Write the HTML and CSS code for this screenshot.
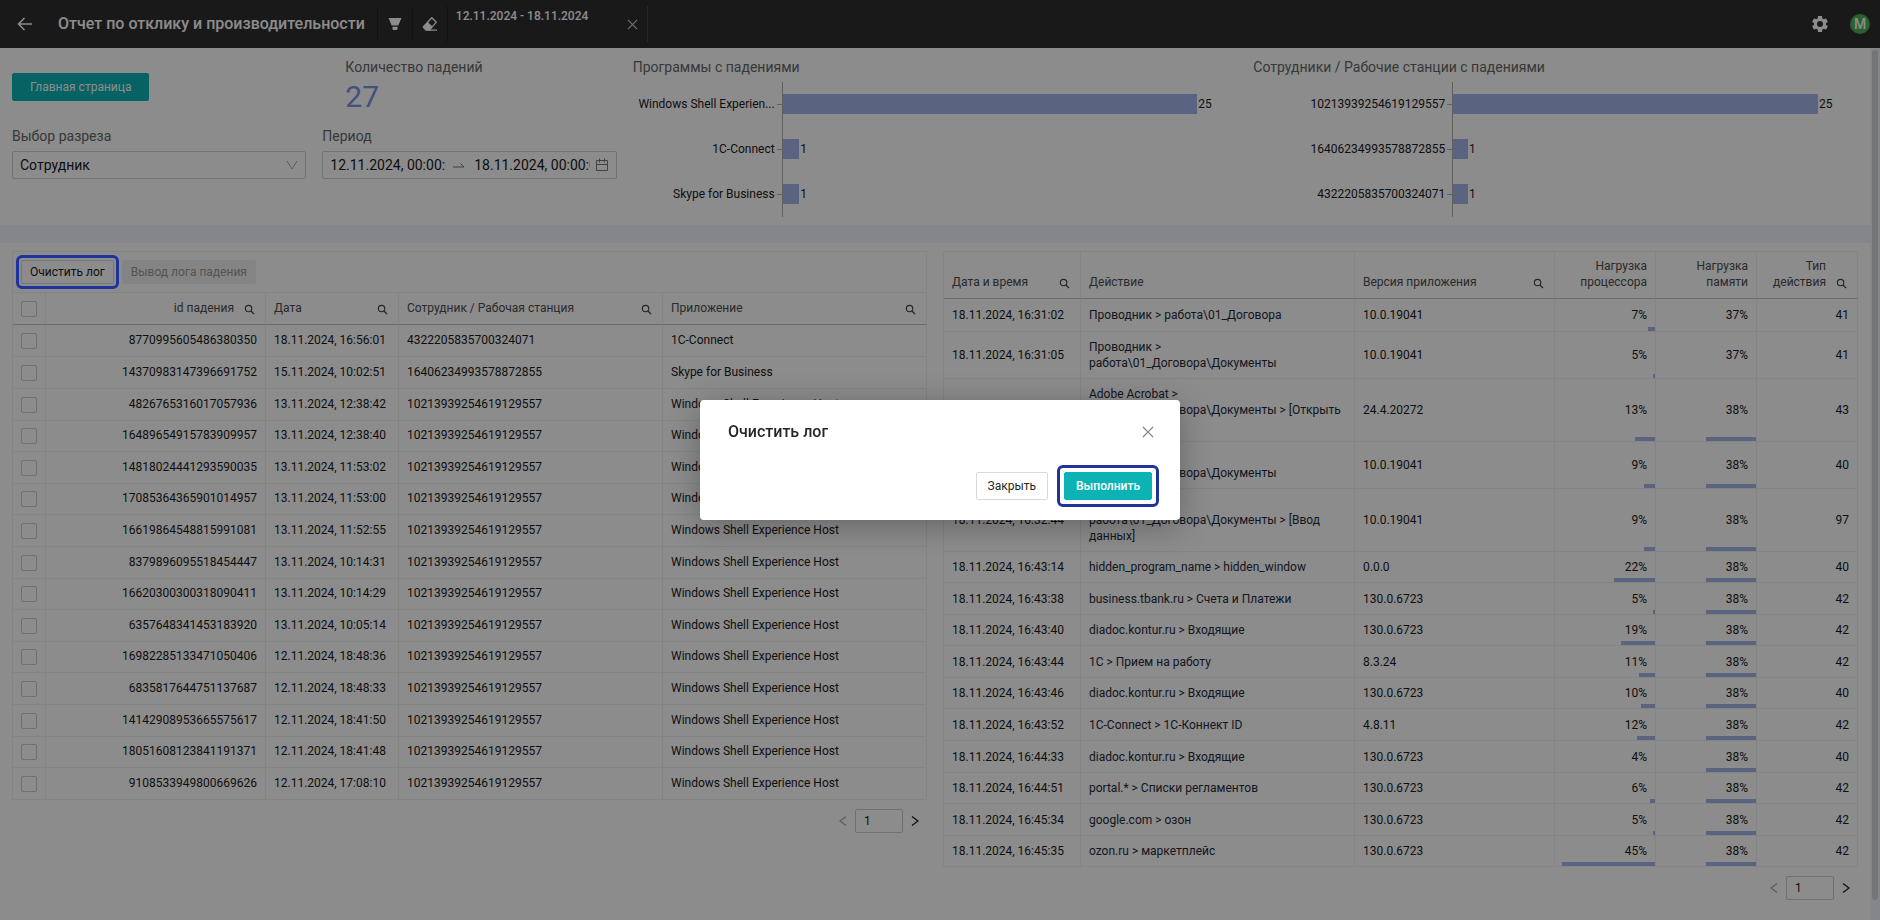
FILE: index.html
```html
<!DOCTYPE html>
<html lang="ru">
<head>
<meta charset="utf-8">
<meta name="viewport" content="width=device-width, initial-scale=1">
<title>Отчет по отклику и производительности</title>
<link rel="stylesheet" href="styles.css">
</head>
<body>
<svg class="sprite" aria-hidden="true">
  <symbol id="search" viewBox="0 0 12 12"><circle cx="5" cy="5" r="3.5" fill="none" stroke="currentColor" stroke-width="1.2"/><path d="M7.6 7.6 11 11" stroke="currentColor" stroke-width="1.4"/></symbol>
  <symbol id="cross" viewBox="0 0 12 12"><path d="M1 1 11 11M11 1 1 11" stroke="currentColor" stroke-width="1.2"/></symbol>
  <symbol id="prev" viewBox="0 0 8 12"><path d="M7 1.5 1 6 7 10.5" fill="none" stroke="currentColor" stroke-width="1.3"/></symbol>
  <symbol id="next" viewBox="0 0 8 12"><path d="M1 1.5 7 6 1 10.5" fill="none" stroke="currentColor" stroke-width="1.3"/></symbol>
</svg>
<div class="app">
  <header class="topbar">
    <button class="icon-button back" aria-label="Назад"><svg width="16" height="14" viewBox="0 0 16 14"><path d="M15 7H2M7.500 1 1.500 7 7.500 13" fill="none" stroke="currentColor" stroke-width="1.6"/></svg></button>
    <h1 class="topbar-title">Отчет по отклику и производительности</h1>
    <button class="icon-button tool" aria-label="Фильтр"><svg width="14" height="14" viewBox="0 0 14 14"><path fill="currentColor" d="M.5 1h13L10.300 8.500H3.700zM4.500 9.800h5V12.300l-.8.700H5.300l-.8-.700z"/></svg></button>
    <button class="icon-button tool" aria-label="Очистить фильтры"><svg width="16" height="16" viewBox="0 0 16 16"><path fill="none" stroke="currentColor" stroke-width="1.300" stroke-linejoin="round" d="M9.800 1.700 14.300 6.200 7.500 14.200H4.200L1.200 11z"/><path fill="currentColor" d="M5.700 6 10.500 10.600 7.500 14.300H4.200L.8 11zM7 13.500h8v1.200H7z"/></svg></button>
    <div class="period-chip">
      <span class="period-text">12.11.2024 - 18.11.2024</span>
      <button class="icon-button chip-close" aria-label="Сбросить период"><svg width="11" height="11"><use href="#cross"/></svg></button>
    </div>
    <div class="topbar-right">
      <button class="icon-button" aria-label="Настройки"><svg width="20" height="20" viewBox="0 0 24 24"><path fill="currentColor" d="M19.140 12.940c.04-.3.06-.61.06-.94s-.02-.64-.07-.94l2.030-1.580a.49.49 0 0 0 .12-.61l-1.920-3.320a.49.49 0 0 0-.59-.22l-2.390.96a7 7 0 0 0-1.620-.94l-.36-2.540A.48.48 0 0 0 13.920 2.400h-3.840a.47.47 0 0 0-.47.41l-.36 2.540c-.59.24-1.130.57-1.620.94l-2.390-.96a.48.48 0 0 0-.59.22L2.740 8.870a.47.47 0 0 0 .12.61l2.030 1.580c-.05.3-.09.63-.09.94s.02.64.07.94l-2.030 1.580a.49.49 0 0 0-.12.61l1.920 3.320c.12.22.37.29.59.22l2.390-.96c.5.38 1.030.7 1.620.94l.36 2.540c.05.24.24.41.48.41h3.840c.24 0 .44-.17.47-.41l.36-2.540a6.800 6.800 0 0 0 1.620-.94l2.390.96c.22.08.47 0 .59-.22l1.920-3.320a.47.47 0 0 0-.12-.61zM12 15.600a3.600 3.600 0 1 1 0-7.200 3.600 3.600 0 0 1 0 7.200z"/></svg></button>
      <button class="avatar" aria-label="Профиль">M</button>
    </div>
  </header>

  <div class="viewport">
    <main class="content">
      <section class="summary">
        <div class="controls">
          <div><button class="button primary home">Главная страница</button></div>
          <div class="metric"><h2 class="caption">Количество падений</h2><p class="metric-value">27</p></div>
          <div class="field">
            <label class="caption" for="slice">Выбор разреза</label>
            <div class="select-box">
              <select id="slice"><option>Сотрудник</option></select>
              <svg class="chevron" width="12" height="10" viewBox="0 0 12 10"><path d="M1 1 6 9 11 1" fill="none" stroke="currentColor"/></svg>
            </div>
          </div>
          <div class="field">
            <label class="caption" for="from">Период</label>
            <div class="range-box">
              <input id="from" type="text" value="12.11.2024, 00:00:00">
              <svg class="range-arrow" width="12" height="6" viewBox="0 0 12 6"><path d="M0 5H11L7.500 1.500" fill="none" stroke="currentColor"/></svg>
              <input type="text" aria-label="Конец периода" value="18.11.2024, 00:00:00">
              <svg width="14" height="14" viewBox="0 0 14 14"><path d="M1.500 2.500h11v10h-11zM1.500 6.500h11M4.500 .5v4M9.500 .5v4" fill="none" stroke="currentColor"/></svg>
            </div>
          </div>
        </div>
        <figure class="chart programs">
          <figcaption class="caption">Программы с падениями</figcaption>
          <div class="chart-row"><span class="chart-label">Windows Shell Experien...</span><div class="track"><i class="chart-bar" style="width:100%"></i><span>25</span></div></div>
          <div class="chart-row"><span class="chart-label">1C-Connect</span><div class="track"><i class="chart-bar" style="width:4%"></i><span>1</span></div></div>
          <div class="chart-row"><span class="chart-label">Skype for Business</span><div class="track"><i class="chart-bar" style="width:4%"></i><span>1</span></div></div>
        </figure>
        <figure class="chart stations">
          <figcaption class="caption">Сотрудники / Рабочие станции с падениями</figcaption>
          <div class="chart-row"><span class="chart-label">10213939254619129557</span><div class="track"><i class="chart-bar" style="width:100%"></i><span>25</span></div></div>
          <div class="chart-row"><span class="chart-label">16406234993578872855</span><div class="track"><i class="chart-bar" style="width:4%"></i><span>1</span></div></div>
          <div class="chart-row"><span class="chart-label">4322205835700324071</span><div class="track"><i class="chart-bar" style="width:4%"></i><span>1</span></div></div>
        </figure>
      </section>

      <section class="details">
        <div class="panel">
          <div class="toolbar">
            <div class="ring ring-small"><button class="button small">Очистить лог</button></div>
            <button class="button small" disabled>Вывод лога падения</button>
          </div>
          <table class="grid crashes">
            <colgroup><col class="w-check"><col class="w-id"><col class="w-date"><col><col></colgroup>
            <thead><tr>
              <th class="check"><input type="checkbox" aria-label="Выбрать все"></th>
              <th><div class="head right"><span>id падения</span><svg><use href="#search"/></svg></div></th>
              <th><div class="head"><span>Дата</span><svg><use href="#search"/></svg></div></th>
              <th><div class="head"><span>Сотрудник / Рабочая станция</span><svg><use href="#search"/></svg></div></th>
              <th><div class="head"><span>Приложение</span><svg><use href="#search"/></svg></div></th>
            </tr></thead>
            <tbody>
              <tr><td class="check"><input type="checkbox" aria-label="Выбрать строку"></td><td class="num">8770995605486380350</td><td>18.11.2024, 16:56:01</td><td>4322205835700324071</td><td>1C-Connect</td></tr>
              <tr><td class="check"><input type="checkbox" aria-label="Выбрать строку"></td><td class="num">14370983147396691752</td><td>15.11.2024, 10:02:51</td><td>16406234993578872855</td><td>Skype for Business</td></tr>
              <tr><td class="check"><input type="checkbox" aria-label="Выбрать строку"></td><td class="num">4826765316017057936</td><td>13.11.2024, 12:38:42</td><td>10213939254619129557</td><td>Windows Shell Experience Host</td></tr>
              <tr><td class="check"><input type="checkbox" aria-label="Выбрать строку"></td><td class="num">16489654915783909957</td><td>13.11.2024, 12:38:40</td><td>10213939254619129557</td><td>Windows Shell Experience Host</td></tr>
              <tr><td class="check"><input type="checkbox" aria-label="Выбрать строку"></td><td class="num">14818024441293590035</td><td>13.11.2024, 11:53:02</td><td>10213939254619129557</td><td>Windows Shell Experience Host</td></tr>
              <tr><td class="check"><input type="checkbox" aria-label="Выбрать строку"></td><td class="num">17085364365901014957</td><td>13.11.2024, 11:53:00</td><td>10213939254619129557</td><td>Windows Shell Experience Host</td></tr>
              <tr><td class="check"><input type="checkbox" aria-label="Выбрать строку"></td><td class="num">16619864548815991081</td><td>13.11.2024, 11:52:55</td><td>10213939254619129557</td><td>Windows Shell Experience Host</td></tr>
              <tr><td class="check"><input type="checkbox" aria-label="Выбрать строку"></td><td class="num">8379896095518454447</td><td>13.11.2024, 10:14:31</td><td>10213939254619129557</td><td>Windows Shell Experience Host</td></tr>
              <tr><td class="check"><input type="checkbox" aria-label="Выбрать строку"></td><td class="num">16620300300318090411</td><td>13.11.2024, 10:14:29</td><td>10213939254619129557</td><td>Windows Shell Experience Host</td></tr>
              <tr><td class="check"><input type="checkbox" aria-label="Выбрать строку"></td><td class="num">6357648341453183920</td><td>13.11.2024, 10:05:14</td><td>10213939254619129557</td><td>Windows Shell Experience Host</td></tr>
              <tr><td class="check"><input type="checkbox" aria-label="Выбрать строку"></td><td class="num">16982285133471050406</td><td>12.11.2024, 18:48:36</td><td>10213939254619129557</td><td>Windows Shell Experience Host</td></tr>
              <tr><td class="check"><input type="checkbox" aria-label="Выбрать строку"></td><td class="num">6835817644751137687</td><td>12.11.2024, 18:48:33</td><td>10213939254619129557</td><td>Windows Shell Experience Host</td></tr>
              <tr><td class="check"><input type="checkbox" aria-label="Выбрать строку"></td><td class="num">14142908953665575617</td><td>12.11.2024, 18:41:50</td><td>10213939254619129557</td><td>Windows Shell Experience Host</td></tr>
              <tr><td class="check"><input type="checkbox" aria-label="Выбрать строку"></td><td class="num">18051608123841191371</td><td>12.11.2024, 18:41:48</td><td>10213939254619129557</td><td>Windows Shell Experience Host</td></tr>
              <tr><td class="check"><input type="checkbox" aria-label="Выбрать строку"></td><td class="num">9108533949800669626</td><td>12.11.2024, 17:08:10</td><td>10213939254619129557</td><td>Windows Shell Experience Host</td></tr>
            </tbody>
          </table>
          <nav class="pager" aria-label="Страницы падений">
            <button class="icon-button" aria-label="Предыдущая" disabled><svg width="8" height="12"><use href="#prev"/></svg></button>
            <input type="text" value="1" aria-label="Номер страницы">
            <button class="icon-button" aria-label="Следующая"><svg width="8" height="12"><use href="#next"/></svg></button>
          </nav>
        </div>

        <div class="panel">
          <table class="grid actions">
            <colgroup><col class="w-time"><col><col class="w-version"><col class="w-load"><col class="w-load"><col class="w-load"></colgroup>
            <thead><tr>
              <th><div class="head"><span>Дата и время</span><svg><use href="#search"/></svg></div></th>
              <th>Действие</th>
              <th><div class="head"><span>Версия приложения</span><svg><use href="#search"/></svg></div></th>
              <th class="num">Нагрузка процессора</th>
              <th class="num">Нагрузка памяти</th>
              <th><div class="head right"><span>Тип действия</span><svg><use href="#search"/></svg></div></th>
            </tr></thead>
            <tbody>
              <tr><td>18.11.2024, 16:31:02</td><td class="action">Проводник &gt; работа\01_Договора</td><td>10.0.19041</td><td class="num">7%<i class="load" style="width:7%"></i></td><td class="num">37%</td><td class="num">41</td></tr>
              <tr><td>18.11.2024, 16:31:05</td><td class="action">Проводник &gt; работа\01_Договора\Документы</td><td>10.0.19041</td><td class="num">5%<i class="load" style="width:2%"></i></td><td class="num">37%</td><td class="num">41</td></tr>
              <tr><td>18.11.2024, 16:31:30</td><td class="action">Adobe Acrobat &gt; работа\01_Договора\Документы &gt; [Открыть файл]</td><td>24.4.20272</td><td class="num">13%<i class="load" style="width:20%"></i></td><td class="num">38%<i class="load" style="width:50%"></i></td><td class="num">43</td></tr>
              <tr><td>18.11.2024, 16:32:10</td><td class="action">Проводник &gt; работа\01_Договора\Документы</td><td>10.0.19041</td><td class="num">9%<i class="load" style="width:11%"></i></td><td class="num">38%<i class="load" style="width:50%"></i></td><td class="num">40</td></tr>
              <tr><td>18.11.2024, 16:32:44</td><td class="action">Проводник &gt; работа\01_Договора\Документы &gt; [Ввод данных]</td><td>10.0.19041</td><td class="num">9%<i class="load" style="width:11%"></i></td><td class="num">38%<i class="load" style="width:50%"></i></td><td class="num">97</td></tr>
              <tr><td>18.11.2024, 16:43:14</td><td class="action">hidden_program_name &gt; hidden_window</td><td>0.0.0</td><td class="num">22%<i class="load" style="width:41%"></i></td><td class="num">38%<i class="load" style="width:50%"></i></td><td class="num">40</td></tr>
              <tr><td>18.11.2024, 16:43:38</td><td class="action">business.tbank.ru &gt; Счета и Платежи</td><td>130.0.6723</td><td class="num">5%<i class="load" style="width:2%"></i></td><td class="num">38%<i class="load" style="width:50%"></i></td><td class="num">42</td></tr>
              <tr><td>18.11.2024, 16:43:40</td><td class="action">diadoc.kontur.ru &gt; Входящие</td><td>130.0.6723</td><td class="num">19%<i class="load" style="width:34%"></i></td><td class="num">38%<i class="load" style="width:50%"></i></td><td class="num">42</td></tr>
              <tr><td>18.11.2024, 16:43:44</td><td class="action">1С &gt; Прием на работу</td><td>8.3.24</td><td class="num">11%<i class="load" style="width:16%"></i></td><td class="num">38%<i class="load" style="width:50%"></i></td><td class="num">42</td></tr>
              <tr><td>18.11.2024, 16:43:46</td><td class="action">diadoc.kontur.ru &gt; Входящие</td><td>130.0.6723</td><td class="num">10%<i class="load" style="width:14%"></i></td><td class="num">38%<i class="load" style="width:50%"></i></td><td class="num">40</td></tr>
              <tr><td>18.11.2024, 16:43:52</td><td class="action">1C-Connect &gt; 1С-Коннект ID</td><td>4.8.11</td><td class="num">12%<i class="load" style="width:18%"></i></td><td class="num">38%<i class="load" style="width:50%"></i></td><td class="num">42</td></tr>
              <tr><td>18.11.2024, 16:44:33</td><td class="action">diadoc.kontur.ru &gt; Входящие</td><td>130.0.6723</td><td class="num">4%</td><td class="num">38%<i class="load" style="width:50%"></i></td><td class="num">40</td></tr>
              <tr><td>18.11.2024, 16:44:51</td><td class="action">portal.* &gt; Списки регламентов</td><td>130.0.6723</td><td class="num">6%<i class="load" style="width:5%"></i></td><td class="num">38%<i class="load" style="width:50%"></i></td><td class="num">42</td></tr>
              <tr><td>18.11.2024, 16:45:34</td><td class="action">google.com &gt; озон</td><td>130.0.6723</td><td class="num">5%<i class="load" style="width:2%"></i></td><td class="num">38%<i class="load" style="width:50%"></i></td><td class="num">42</td></tr>
              <tr><td>18.11.2024, 16:45:35</td><td class="action">ozon.ru &gt; маркетплейс</td><td>130.0.6723</td><td class="num">45%<i class="load" style="width:93%"></i></td><td class="num">38%<i class="load" style="width:50%"></i></td><td class="num">42</td></tr>
            </tbody>
          </table>
          <nav class="pager" aria-label="Страницы действий">
            <button class="icon-button" aria-label="Предыдущая" disabled><svg width="8" height="12"><use href="#prev"/></svg></button>
            <input type="text" value="1" aria-label="Номер страницы">
            <button class="icon-button" aria-label="Следующая"><svg width="8" height="12"><use href="#next"/></svg></button>
          </nav>
        </div>
      </section>
    </main>
    <div class="scrollbar"><div class="thumb"></div></div>
  </div>
</div>

<div class="mask"></div>
<div class="modal-layer">
  <section class="modal" role="dialog" aria-modal="true" aria-labelledby="modal-title">
    <div class="modal-head">
      <h2 id="modal-title">Очистить лог</h2>
      <button class="icon-button" aria-label="Закрыть окно"><svg width="12" height="12"><use href="#cross"/></svg></button>
    </div>
    <div class="modal-actions">
      <button class="button">Закрыть</button>
      <div class="ring ring-large"><button class="button primary">Выполнить</button></div>
    </div>
  </section>
</div>
</body>
</html>
```
FILE: styles.css
```css
* { box-sizing: border-box; }

body {
  margin: 0;
  font: 12px/16px Roboto, "Liberation Sans", sans-serif;
  color: #1a1a1a;
  background: #fff;
}

h1, h2, p, figure { margin: 0; }
button, input, select { font: inherit; color: inherit; }
button { cursor: pointer; }
svg { display: block; flex: none; }
.sprite { position: absolute; width: 0; height: 0; }

.app {
  display: flex;
  flex-direction: column;
  min-height: 100vh;
}

/* Top bar */
.topbar {
  display: flex;
  align-items: center;
  height: 48px;
  padding: 0 10px 0 12px;
  background: #2e2e2e;
  color: #fff;
}

.icon-button {
  display: flex;
  align-items: center;
  justify-content: center;
  width: 24px;
  height: 24px;
  padding: 0;
  border: 0;
  background: none;
}

.back { width: 26px; }

.topbar-title {
  margin: 0 12px 0 20px;
  font-size: 16px;
  line-height: 24px;
  font-weight: 500;
  white-space: nowrap;
}

.tool {
  width: 35px;
  height: 36px;
  border-left: 1px solid #222;
}

.period-chip {
  display: flex;
  justify-content: space-between;
  width: 201px;
  height: 36px;
  padding: 0 2px 0 8px;
  border-left: 1px solid #222;
  border-right: 1px solid #4a4a4a;
  font-weight: 500;
}

.period-text { padding-top: 2px; }
.chip-close { align-self: center; color: #d0d0d0; }

.topbar-right {
  display: flex;
  align-items: center;
  gap: 18px;
  margin-left: auto;
}

.avatar {
  width: 20px;
  height: 20px;
  padding: 0;
  border: 0;
  border-radius: 50%;
  background: #4caf50;
  font-size: 14px;
  line-height: 20px;
  font-weight: 500;
  text-align: center;
}

/* Scrolled area */
.viewport {
  display: flex;
  flex: 1;
}

.content {
  display: flex;
  flex-direction: column;
  flex: 1;
  min-width: 0;
}

.scrollbar {
  width: 10px;
  padding: 2px;
  background: #f2f5fe;
}

.thumb {
  width: 6px;
  height: calc(100% - 18px);
  border-radius: 3px;
  background: #d5d5d5;
}

/* Summary */
.summary {
  display: grid;
  grid-template-columns: repeat(3, minmax(0, 1fr));
  gap: 16px;
  padding: 9px 12px 8px;
}

.controls {
  display: grid;
  grid-template-columns: 1fr 1fr;
  gap: 10px 16px;
  align-content: start;
}

.home { margin-top: 16px; }
.metric { padding-left: 23px; }

.caption {
  display: block;
  font-size: 14px;
  line-height: 20px;
  font-weight: 400;
  color: #666;
}

.metric-value {
  font-size: 30px;
  line-height: 39px;
  color: #7a94e4;
}

.field { min-width: 0; }

.select-box,
.range-box {
  display: flex;
  align-items: center;
  height: 28px;
  margin-top: 5px;
  border: 1px solid #d0d0d0;
  border-radius: 2px;
  font-size: 14px;
}

.select-box select {
  flex: 1;
  height: 26px;
  padding: 0 7px;
  border: 0;
  background: none;
  appearance: none;
}

.select-box svg { margin-right: 7px; color: #aaa; }
.range-box { justify-content: space-between; padding: 0 7px; }
.range-box svg { color: #777; }
.range-box .range-arrow { margin: 0 5px 0 2px; }

.range-box input {
  width: 116px;
  padding: 0;
  border: 0;
  background: none;
}

/* Charts */
.chart .caption { margin-bottom: 5px; }

.chart-row {
  display: flex;
  align-items: stretch;
  height: 45px;
}

.chart-label {
  position: relative;
  flex: none;
  padding-right: 7px;
  border-right: 1px solid #b0b0b0;
  line-height: 44px;
  text-align: right;
}

.chart-label::after {
  content: "";
  position: absolute;
  right: 0;
  top: 22px;
  width: 5px;
  height: 1px;
  background: #b0b0b0;
}

.programs .chart-label { width: 150px; }
.stations .chart-label { width: 200px; }

.track {
  display: flex;
  flex: 1;
  align-items: center;
  gap: 1px;
  min-width: 0;
  padding: 0 40px 1px 0;
}

.chart-bar {
  flex: none;
  height: 20px;
  background: #a4b4e7;
}

/* Tables */
.details {
  display: grid;
  grid-template-columns: repeat(2, minmax(0, 1fr));
  flex: 1;
  gap: 16px;
  align-items: start;
  padding: 8px 12px;
  border-top: 18px solid #f2f5fe;
}

.toolbar {
  display: flex;
  gap: 8px;
  padding: 8px;
  border: 1px solid #f0f0f0;
  border-bottom: 0;
}

.grid {
  width: 100%;
  table-layout: fixed;
  border-spacing: 0;
  border-left: 1px solid #f0f0f0;
}

.w-check { width: 33px; }
.w-id { width: 220px; }
.w-date { width: 133px; }
.w-time { width: 137px; }
.w-version { width: 200px; }
.w-load { width: 101px; }

.grid th,
.grid td {
  position: relative;
  height: 31px;
  padding: 7px 8px;
  border-right: 1px solid #f0f0f0;
  border-bottom: 1px solid #f0f0f0;
  text-align: left;
}

.grid th {
  padding: 6px 8px 8px;
  border-top: 1px solid #f0f0f0;
  border-bottom-color: #c4c4c4;
  vertical-align: bottom;
  font-weight: 400;
  color: #4d4d4d;
}

.crashes th { height: 33px; }

.crashes tbody td { padding: 6px 8px 8px; }
.crashes tbody tr td { height: 32px; }
.crashes tbody tr:nth-child(5n + 4) td,
.crashes tbody tr:nth-child(5n + 6) td { height: 31px; }

.actions tbody tr:nth-child(1) td { height: 33px; }
.actions tbody tr:nth-child(7) td,
.actions tbody tr:nth-child(9) td,
.actions tbody tr:nth-child(11) td,
.actions tbody tr:nth-child(12) td,
.actions tbody tr:nth-child(14) td { height: 32px; }

.grid .num { text-align: right; }
.action { color: #1f2a3a; }

.head {
  display: flex;
  align-items: flex-end;
  justify-content: space-between;
}

.head svg { width: 11px; height: 11px; margin: 0 2px 1px 0; color: #444; }
.head.right { justify-content: flex-end; gap: 10px; text-align: right; }

.grid .check,
.crashes tbody .check { padding: 0 8px; vertical-align: middle; }

.check input {
  display: block;
  width: 16px;
  height: 16px;
  margin: 0;
  border: 1px solid #ccc;
  border-radius: 2px;
  background: #fff;
  appearance: none;
}

.load {
  position: absolute;
  right: 0;
  bottom: 0;
  height: 4px;
  background: #a4b4e7;
}

.pager {
  display: flex;
  justify-content: flex-end;
  margin-top: 9px;
}

.pager input {
  width: 48px;
  height: 24px;
  padding: 0 8px;
  border: 1px solid #ccc;
  border-radius: 2px;
  background: #fff;
}

.pager :disabled { color: #aaa; }

/* Buttons */
.button {
  height: 28px;
  padding: 0 11px;
  border: 1px solid #d9d9d9;
  border-radius: 2px;
  background: #fff;
  white-space: nowrap;
}

.button.primary {
  border-color: #0cb3b5;
  background: #0cb3b5;
  color: #fff;
}

.button.home { padding: 0 17px; }
.button.small { height: 24px; padding: 0 8px; }

.button:disabled {
  border-color: #f0f0f0;
  background: #f0f0f0;
  color: #999;
}

.ring { position: relative; display: flex; }

.ring::after {
  content: "";
  position: absolute;
  z-index: 20;
  border: 3px solid #1e349b;
  border-radius: 6px;
  pointer-events: none;
}

.ring-small::after { inset: -5px; }
.ring-large::after { inset: -7px; }

/* Dialog */
.mask {
  position: fixed;
  inset: 0;
  z-index: 10;
  background: rgba(0, 0, 0, 0.45);
}

.modal-layer {
  position: fixed;
  inset: 0;
  z-index: 30;
  display: flex;
  align-items: center;
  justify-content: center;
}

.modal {
  width: 480px;
  padding: 20px 28px;
  border-radius: 4px;
  background: #fff;
  box-shadow: 0 6px 32px rgba(0, 0, 0, 0.28);
  color: #262626;
}

.modal-head {
  display: flex;
  align-items: center;
  justify-content: space-between;
}

.modal-head h2 {
  font-size: 16px;
  line-height: 24px;
  font-weight: 500;
}

.modal-head .icon-button { margin-right: -8px; color: #808080; }

.modal-actions {
  display: flex;
  justify-content: flex-end;
  gap: 16px;
  margin-top: 28px;
}

.modal-actions .primary { font-weight: 500; }
```
